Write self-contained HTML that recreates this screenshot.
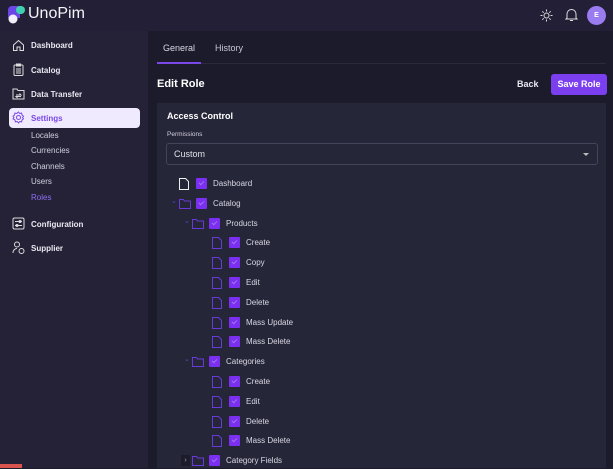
<!DOCTYPE html><html><head><meta charset="utf-8"><style>
*{margin:0;padding:0;box-sizing:border-box}
body{width:613px;height:468px;overflow:hidden;background:#1c1b2c;font-family:"Liberation Sans",sans-serif;position:relative;color:#fff}
.top{position:absolute;left:0;top:0;width:613px;height:31px;background:#231f37}
.side{position:absolute;left:0;top:31px;width:148px;height:437px;background:#252238}
.abs{position:absolute}
.nav{position:absolute;left:31px;font-size:8px;font-weight:bold;color:#e8e8f0}
.sub{position:absolute;left:31px;font-size:8px;color:#cfd0dc}
.ic{position:absolute;left:12px;width:13px;height:13px}
.card{position:absolute;left:157px;top:103px;width:449px;height:365px;background:#262639}
.row{position:absolute;height:14px;font-size:8px;color:#d8d8e4;line-height:12px}
.cb{position:absolute;width:11px;height:11px;background:#7b2ff0;border-radius:1px}
.cb:after{content:"";position:absolute;left:4px;top:2px;width:2px;height:4px;border:solid #9a78e8;border-width:0 1px 1px 0;transform:rotate(45deg)}
.lab{position:absolute;white-space:nowrap}
</style></head><body>
<div class="top"></div>
<svg class="abs" style="left:8px;top:6px" width="18" height="18" viewBox="0 0 18 18"><path d="M4 0h8v12H0V4a4 4 0 0 1 4-4z" fill="#6c45e6"/><rect x="8" y="0" width="9" height="8" rx="4" fill="#3ed0b0"/><circle cx="5" cy="13" r="4.5" fill="#f3eefc"/></svg>
<div class="abs" style="left:28px;top:5px;font-size:16px;color:#f4f4f8">UnoPim</div>
<svg class="abs" style="left:540px;top:9px" width="13" height="13" viewBox="0 0 13 13" stroke="#ddd" fill="none"><circle cx="6.5" cy="6.5" r="2.5"/><path d="M6.5 0.5v2M6.5 10.5v2M0.5 6.5h2M10.5 6.5h2M2.3 2.3l1.4 1.4M9.3 9.3l1.4 1.4M2.3 10.7l1.4-1.4M9.3 3.7l1.4-1.4"/></svg>
<svg class="abs" style="left:565px;top:8px" width="13" height="14" viewBox="0 0 13 14" stroke="#ddd" fill="none"><path d="M2 10V6a4.5 4.5 0 0 1 9 0v4l1 1H1zM5 12.5h3"/></svg>
<div class="abs" style="left:587px;top:6px;width:19px;height:19px;border-radius:50%;background:#9a7cf0;font-size:7px;font-weight:bold;text-align:center;line-height:19px">E</div>
<div class="side"></div>
<svg class="ic" style="top:39px" viewBox="0 0 13 13" fill="none" stroke="#ddd"><path d="M1.5 6L6.5 1.5 11.5 6v5.5h-3.5v-3.5h-3v3.5H1.5z"/></svg>
<div class="nav" style="top:41px">Dashboard</div>
<svg class="ic" style="top:63px" viewBox="0 0 13 13" fill="none" stroke="#ddd"><rect x="2" y="2" width="9" height="10.5" rx="1"/><path d="M4.5 1h4v2h-4zM4 6h5M4 8h5M4 10h5"/></svg>
<div class="nav" style="top:66px">Catalog</div>
<svg class="ic" style="top:87px" viewBox="0 0 13 13" fill="none" stroke="#ddd"><path d="M1 2h4l1 1.5h6V12H1z"/><path d="M4 8h5l-1.5-1.5M9 9.5H4l1.5 1.5"/></svg>
<div class="nav" style="top:90px">Data Transfer</div>
<div class="abs" style="left:9px;top:108px;width:131px;height:20px;background:#efeafd;border-radius:4px"></div>
<svg class="ic" style="top:111px" viewBox="0 0 13 13" fill="none" stroke="#7a48e8"><circle cx="6.5" cy="6.5" r="2"/><path d="M6.5 1l1.2 1.5 1.9-.4.4 1.9 1.5 1.2-1 1.3 1 1.3-1.5 1.2-.4 1.9-1.9-.4-1.2 1.5-1.2-1.5-1.9.4-.4-1.9L1 7.8l1-1.3-1-1.3L2.5 4l.4-1.9 1.9.4z"/></svg>
<div class="nav" style="top:114px;color:#7a48e8">Settings</div>
<div class="sub" style="top:131px">Locales</div>
<div class="sub" style="top:146px">Currencies</div>
<div class="sub" style="top:162px">Channels</div>
<div class="sub" style="top:177px">Users</div>
<div class="sub" style="top:193px;color:#8d6ff0">Roles</div>
<svg class="ic" style="top:217px" viewBox="0 0 13 13" fill="none" stroke="#ddd"><rect x="1" y="1" width="11" height="11" rx="1.5"/><path d="M3 4.5h7M3 8.5h7"/><circle cx="8" cy="4.5" r="1"/><circle cx="5" cy="8.5" r="1"/></svg>
<div class="nav" style="top:220px">Configuration</div>
<svg class="ic" style="top:241px" viewBox="0 0 13 13" fill="none" stroke="#ddd"><circle cx="5" cy="3.5" r="2.5"/><path d="M1 12c0-3 2-4.5 4-4.5"/><circle cx="9.5" cy="10" r="2.5"/></svg>
<div class="nav" style="top:244px">Supplier</div>
<div class="abs" style="left:0;top:464px;width:22px;height:4px;background:#d9534f"></div>

<div class="abs" style="left:163px;top:43px;font-size:9px;color:#d8d8e4">General</div>
<div class="abs" style="left:215px;top:43px;font-size:9px;color:#c8c8d4">History</div>
<div class="abs" style="left:157px;top:63px;width:449px;height:1px;background:#2b2a3c"></div>
<div class="abs" style="left:157px;top:62px;width:44px;height:2px;background:#7a48e8"></div>
<div class="abs" style="left:157px;top:78px;font-size:11px;font-weight:bold">Edit Role</div>
<div class="abs" style="left:517px;top:79px;font-size:9px;font-weight:bold;color:#e8e8f0">Back</div>
<div class="abs" style="left:551px;top:74px;width:56px;height:21px;background:#7b3ff0;border-radius:3px;font-size:9px;font-weight:bold;text-align:center;line-height:21px">Save Role</div>
<div class="card"></div>
<div class="abs" style="left:167px;top:111px;font-size:9px;font-weight:bold">Access Control</div>
<div class="abs" style="left:167px;top:131px;font-size:6.5px;color:#d0d0dc">Permissions</div>
<div class="abs" style="left:166px;top:143px;width:432px;height:22px;border:1px solid #44445a;border-radius:3px"></div>
<div class="abs" style="left:174px;top:149px;font-size:9px;color:#e0e0ea">Custom</div>
<div class="abs" style="left:583px;top:153px;width:0;height:0;border-left:3px solid transparent;border-right:3px solid transparent;border-top:3px solid #bbb"></div>
<div id="tree"></div>
<script>
var X=[179,192,212];
var rows=[[0,"f","Dashboard",0],[0,"d","Catalog",1],[1,"d","Products",1],[2,"f","Create"],[2,"f","Copy"],[2,"f","Edit"],[2,"f","Delete"],[2,"f","Mass Update"],[2,"f","Mass Delete"],[1,"d","Categories",1],[2,"f","Create"],[2,"f","Edit"],[2,"f","Delete"],[2,"f","Mass Delete"],[1,"d","Category Fields",2]];
var h="";rows.forEach(function(r,i){var y=177+i*19.8,x=X[r[0]];var fc=(r[0]==0&&r[1]=="f")?"#eee":"#6a3ad8";
if(r[1]=="f")h+='<svg class="abs" style="left:'+x+'px;top:'+(y+1)+'px" width="10" height="12" viewBox="0 0 10 12" fill="none" stroke="'+fc+'"><path d="M.5.5h6l3 3v8h-9z"/></svg>';
else{h+='<svg class="abs" style="left:'+x+'px;top:'+(y+2)+'px" width="12" height="10" viewBox="0 0 12 10" fill="none" stroke="#6a3ad8"><path d="M.5.5h4l1 1.5h6v7.5h-11z"/></svg>';
if(r[3]==2)h+='<div class="abs" style="left:'+(x-11)+'px;top:'+(y+1)+'px;width:9px;height:11px;background:#1c1b2c;color:#aaa;font-size:7px;text-align:center;line-height:11px">›</div>';
else h+='<div class="abs" style="left:'+(x-8)+'px;top:'+(y)+'px;color:#6a3ad8;font-size:7px">⌄</div>';}
h+='<div class="cb" style="left:'+(x+17)+'px;top:'+(y+1)+'px"></div>';
h+='<div class="row lab" style="left:'+(x+34)+'px;top:'+(y+1)+'px">'+r[2]+'</div>';});
document.getElementById("tree").innerHTML=h;
</script>
</body></html>
